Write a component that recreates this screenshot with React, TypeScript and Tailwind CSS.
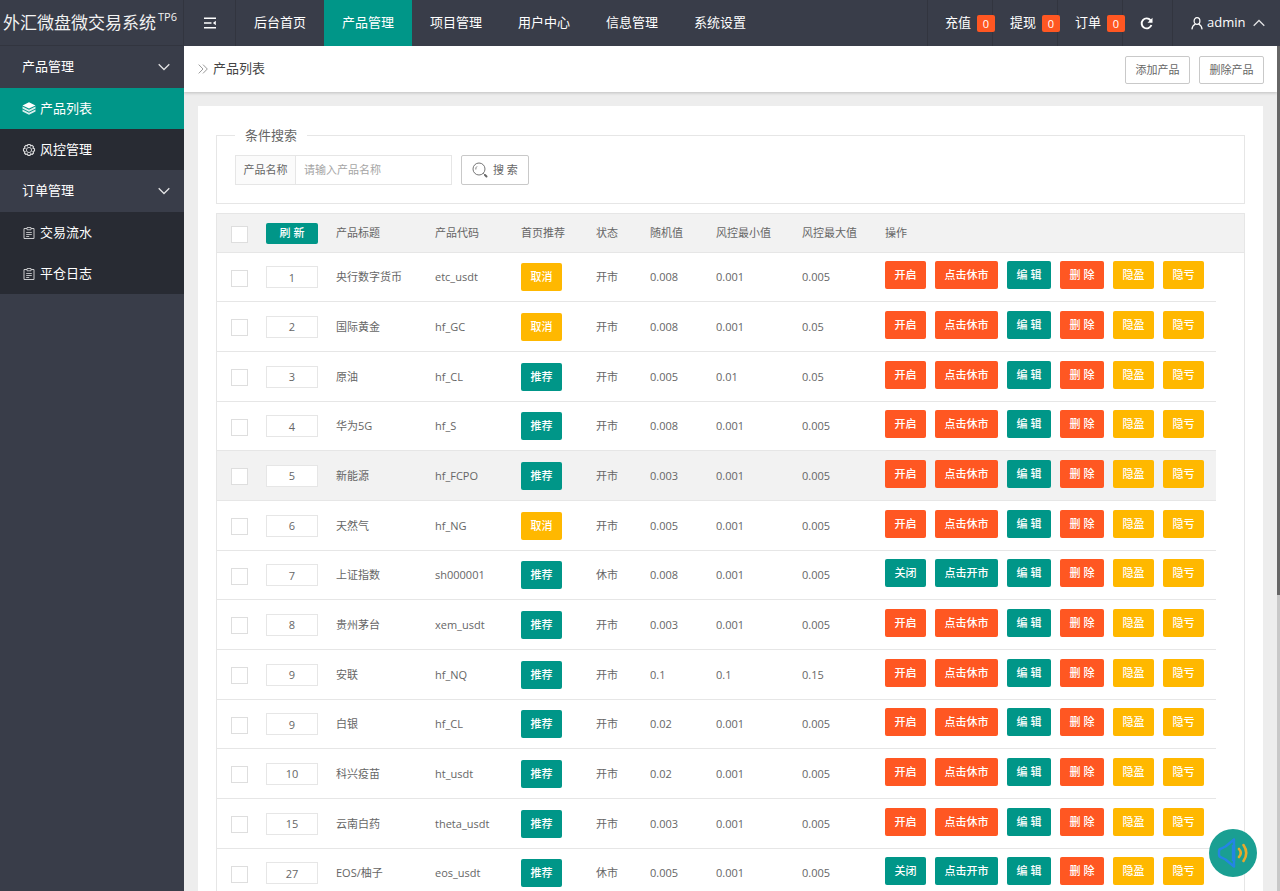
import React, { useState } from "react";

type Row = {
  sort: number;
  title: string;
  code: string;
  recommended: boolean;
  open: boolean;
  random: string;
  min: string;
  max: string;
};

const ROWS: Row[] = [
  { sort: 1, title: "央行数字货币", code: "etc_usdt", recommended: true, open: true, random: "0.008", min: "0.001", max: "0.005" },
  { sort: 2, title: "国际黄金", code: "hf_GC", recommended: true, open: true, random: "0.008", min: "0.001", max: "0.05" },
  { sort: 3, title: "原油", code: "hf_CL", recommended: false, open: true, random: "0.005", min: "0.01", max: "0.05" },
  { sort: 4, title: "华为5G", code: "hf_S", recommended: false, open: true, random: "0.008", min: "0.001", max: "0.005" },
  { sort: 5, title: "新能源", code: "hf_FCPO", recommended: false, open: true, random: "0.003", min: "0.001", max: "0.005" },
  { sort: 6, title: "天然气", code: "hf_NG", recommended: true, open: true, random: "0.005", min: "0.001", max: "0.005" },
  { sort: 7, title: "上证指数", code: "sh000001", recommended: false, open: false, random: "0.008", min: "0.001", max: "0.005" },
  { sort: 8, title: "贵州茅台", code: "xem_usdt", recommended: false, open: true, random: "0.003", min: "0.001", max: "0.005" },
  { sort: 9, title: "安联", code: "hf_NQ", recommended: false, open: true, random: "0.1", min: "0.1", max: "0.15" },
  { sort: 9, title: "白银", code: "hf_CL", recommended: false, open: true, random: "0.02", min: "0.001", max: "0.005" },
  { sort: 10, title: "科兴疫苗", code: "ht_usdt", recommended: false, open: true, random: "0.02", min: "0.001", max: "0.005" },
  { sort: 15, title: "云南白药", code: "theta_usdt", recommended: false, open: true, random: "0.003", min: "0.001", max: "0.005" },
  { sort: 27, title: "EOS/柚子", code: "eos_usdt", recommended: false, open: false, random: "0.005", min: "0.001", max: "0.005" },
];

const NAV = ["后台首页", "产品管理", "项目管理", "用户中心", "信息管理", "系统设置"];
const COUNTERS = ["充值", "提现", "订单"];
const HEADINGS = ["产品标题", "产品代码", "首页推荐", "状态", "随机值", "风控最小值", "风控最大值", "操作"];

const TONES = {
  green: "bg-[#009688]",
  orange: "bg-[#ff5722]",
  yellow: "bg-[#ffb800]",
};
const SIZES = { sm: "w-[41px]", md: "w-[44px]", lg: "w-[63px]" };

function Action({ tone, size = "sm", children }: { tone: keyof typeof TONES; size?: keyof typeof SIZES; children: React.ReactNode }) {
  return (
    <button type="button" className={`h-7 shrink-0 rounded-xs text-center text-[11px] leading-7 font-medium whitespace-nowrap text-white ${TONES[tone]} ${SIZES[size]}`}>
      {children}
    </button>
  );
}

function Chevron({ up = false }: { up?: boolean }) {
  return (
    <svg width="12" height="8" viewBox="0 0 12 8" fill="none" stroke="currentColor" strokeWidth="1.3" opacity=".85" aria-hidden="true">
      <path d={up ? "M.7 6.8 6 1.5l5.3 5.3" : "M.7 1.2 6 6.5l5.3-5.3"} />
    </svg>
  );
}

function MenuIcon() {
  return (
    <svg width="12" height="12" viewBox="0 0 12 12" fill="none" stroke="currentColor" strokeWidth="1.5" aria-hidden="true">
      <path d="M0 1.200h12M0 6h7.500M0 10.800h12" />
      <path d="M11.800 3.800v4.400L8.900 6z" fill="currentColor" stroke="none" />
    </svg>
  );
}

function ReloadIcon() {
  return (
    <svg width="13" height="13" viewBox="0 0 13 13" fill="none" aria-hidden="true">
      <path d="M10.600 3.300A5 5 0 1 0 11.400 8" stroke="currentColor" strokeWidth="1.900" />
      <path d="M12.500.8v5h-5z" fill="currentColor" />
    </svg>
  );
}

function UserIcon() {
  return (
    <svg width="12" height="13" viewBox="0 0 12 13" fill="none" stroke="currentColor" strokeWidth="1.200" aria-hidden="true">
      <ellipse cx="6" cy="4" rx="2.900" ry="3.300" />
      <path d="M4.400 7C2.400 8 1.100 9.800.9 12.400M7.600 7c2 1 3.300 2.800 3.500 5.400" />
    </svg>
  );
}

function LayersIcon() {
  return (
    <svg width="14" height="13" viewBox="0 0 14 13" fill="currentColor" aria-hidden="true">
      <path d="M7 .3 13.500 3.400 7 6.500.5 3.400z" />
      <path d="M.5 4.600 7 7.700l6.500-3.100v2L7 9.700.5 6.600z" opacity=".85" />
      <path d="M.5 7.600 7 10.700l6.500-3.100v2L7 12.700.5 9.600z" opacity=".85" />
    </svg>
  );
}

function GearIcon() {
  return (
    <svg width="14" height="14" viewBox="0 0 14 14" fill="none" stroke="currentColor" opacity=".85" aria-hidden="true">
      <circle cx="7" cy="7" r="2.600" strokeWidth=".9" />
      <path
        d="M5.900.7h2.200l.5 1.500 1.500-.7 1.500 1.500-.7 1.500 1.600.5v2.200l-1.600.5.7 1.500-1.500 1.500-1.500-.7-.5 1.600H5.900l-.5-1.600-1.500.7-1.500-1.500.7-1.500-1.600-.5V5l1.600-.5-.7-1.500 1.500-1.500 1.500.7z"
        transform="translate(0 .8)"
        strokeWidth="1.100"
        strokeLinejoin="round"
      />
    </svg>
  );
}

function NoteIcon() {
  return (
    <svg width="12" height="12" viewBox="0 0 12 12" fill="none" stroke="currentColor" opacity=".75" aria-hidden="true">
      <path d="M4 1.500H1v10h10v-10H8" />
      <path d="M4 .5h4v2.300H4zM3.200 5.500h5.600M3.200 7.500h5.600M3.200 9.500h3" strokeWidth=".9" />
    </svg>
  );
}

function SearchIcon() {
  return (
    <svg width="16" height="16" viewBox="0 0 16 16" fill="none" stroke="currentColor" aria-hidden="true">
      <circle cx="7" cy="7" r="6" strokeWidth=".9" />
      <path d="M3.800 7.500A3.300 3.300 0 0 1 5 4.400" strokeWidth=".8" />
      <path d="m11.300 11.300 1.400 1.400" />
      <path d="m13 13 1.500 1.500" strokeWidth="2" strokeLinecap="round" />
    </svg>
  );
}

function Breadcrumb() {
  return (
    <svg width="10" height="10" viewBox="0 0 10 10" fill="none" stroke="#999" aria-hidden="true">
      <path d="m.7.600 4.300 4.400L.7 9.400M5 .600 9.300 5 5 9.400" />
    </svg>
  );
}

function SpeakerIcon() {
  return (
    <svg width="32" height="32" viewBox="0 0 32 32" fill="none" aria-hidden="true">
      <path d="M17 2.500 8.500 9.500 4.500 11.500a3 3 0 0 0-2.500 3v3a3 3 0 0 0 2.500 3l4 2L17 29.500z" stroke="#2485e4" strokeWidth="2.400" strokeLinejoin="round" />
      <path d="M16.500 8v16" stroke="#2485e4" strokeWidth="3.400" />
      <path d="M22 12q3.500 4 0 8M26.500 8q5.500 8 0 16" stroke="#e8a92c" strokeWidth="2.600" strokeLinecap="round" />
    </svg>
  );
}

function Check({ label }: { label: string }) {
  return (
    <input
      type="checkbox"
      aria-label={label}
      className="mt-[2px] block size-[17px] appearance-none border border-[#dedede] bg-white checked:border-[#009688] checked:bg-[#009688]"
    />
  );
}

function SideLink({ icon, active = false, children }: { icon: React.ReactNode; active?: boolean; children: React.ReactNode }) {
  return (
    <a href="#" className={`flex h-[41px] items-center gap-1 pl-[22px] ${active ? "bg-[#009688]" : ""}`}>
      <span className="flex w-[14px] justify-center">{icon}</span>
      {children}
    </a>
  );
}

function SideGroup({ title, children }: { title: string; children: React.ReactNode }) {
  const [open, setOpen] = useState(true);
  return (
    <li>
      <button type="button" aria-expanded={open} onClick={() => setOpen(!open)} className="flex h-[42px] w-full items-center justify-between pr-[14px] pl-[22px]">
        {title}
        <Chevron />
      </button>
      {open && <div className="bg-[#282b33]">{children}</div>}
    </li>
  );
}

function ProductRow({ row }: { row: Row }) {
  const line = "border-b border-[#e6e6e6] pl-[9px]";
  return (
    <tr className={`h-[50px] nth-[3n+1]:h-[49px] ${row.sort === 5 ? "[&>td:not(:last-child)]:bg-[#f2f2f2]" : ""}`}>
      <td className="border-b border-[#e6e6e6] pl-[14px]">
        <Check label={`选择 ${row.title}`} />
      </td>
      <td className={line}>
        <input aria-label={`${row.title} 排序`} defaultValue={row.sort} className="block h-[22px] w-[52px] border border-[#e6e6e6] bg-white text-center outline-none" />
      </td>
      <td className={line}>{row.title}</td>
      <td className={line}>{row.code}</td>
      <td className={line}>
        <div className="flex">{row.recommended ? <Action tone="yellow">取消</Action> : <Action tone="green">推荐</Action>}</div>
      </td>
      <td className={line}>{row.open ? "开市" : "休市"}</td>
      <td className={line}>{row.random}</td>
      <td className={line}>{row.min}</td>
      <td className={line}>{row.max}</td>
      <td className={line}>
        <div className="flex gap-[9px] pb-1">
          <Action tone={row.open ? "orange" : "green"}>{row.open ? "开启" : "关闭"}</Action>
          <Action tone={row.open ? "orange" : "green"} size="lg">
            {row.open ? "点击休市" : "点击开市"}
          </Action>
          <Action tone="green" size="md">编 辑</Action>
          <Action tone="orange" size="md">删 除</Action>
          <Action tone="yellow">隐盈</Action>
          <Action tone="yellow">隐亏</Action>
        </div>
      </td>
      <td />
    </tr>
  );
}

export default function App() {
  return (
    <div className="flex h-screen flex-col overflow-hidden bg-[#ededed] font-['Open_Sans','Noto_Sans_CJK_SC',sans-serif] text-[13px] text-[#666]">
      <header className="flex h-[46px] shrink-0 bg-[#393d49] text-white">
        <h1 className="flex w-[184px] shrink-0 items-center gap-[2px] border-r border-b border-[#32353f] pl-[3px] text-[17px] whitespace-nowrap text-[#f2f2f2]">
          外汇微盘微交易系统
          <sup className="text-[11px] font-medium">TP6</sup>
        </h1>
        <button type="button" aria-label="折叠菜单" className="flex w-[52px] shrink-0 items-center justify-center border-r border-[#32353f]">
          <MenuIcon />
        </button>
        <nav className="flex flex-1">
          {NAV.map((item) => (
            <a key={item} href="#" className={`flex w-[88px] items-center justify-center whitespace-nowrap ${item === "产品管理" ? "bg-[#009688]" : ""}`}>
              {item}
            </a>
          ))}
        </nav>
        <div className="flex">
          {COUNTERS.map((item) => (
            <a key={item} href="#" className="relative flex w-[65px] items-center border-l border-[#32353f] pl-[17px]">
              {item}
              <span className="absolute top-[15px] left-[49px] z-10 h-[17px] w-[18px] rounded-xs bg-[#ff5722] text-center text-[11px] leading-[17px]">0</span>
            </a>
          ))}
          <button type="button" aria-label="刷新页面" className="flex w-[50px] items-center border-l border-[#32353f] pl-[17px]">
            <ReloadIcon />
          </button>
          <button type="button" className="flex w-[108px] items-center gap-1 border-l border-[#32353f] pl-[18px]">
            <UserIcon />
            <span className="mr-1">admin</span>
            <Chevron up />
          </button>
        </div>
      </header>

      <div className="flex min-h-0 flex-1">
        <aside className="w-[184px] shrink-0 bg-[#393d49] text-white">
          <ul>
            <SideGroup title="产品管理">
              <SideLink icon={<LayersIcon />} active>产品列表</SideLink>
              <SideLink icon={<GearIcon />}>风控管理</SideLink>
            </SideGroup>
            <SideGroup title="订单管理">
              <SideLink icon={<NoteIcon />}>交易流水</SideLink>
              <SideLink icon={<NoteIcon />}>平仓日志</SideLink>
            </SideGroup>
          </ul>
        </aside>

        <main className="min-w-0 flex-1 overflow-hidden">
          <div className="flex h-[46px] items-center justify-between bg-white pr-[13px] pl-[14px] shadow-[0_1px_3px_rgba(0,0,0,0.2)]">
            <div className="flex items-center gap-[5px] text-[#444]">
              <Breadcrumb />
              产品列表
            </div>
            <div className="flex gap-[9px] pt-[2px] text-[11px]">
              <button type="button" className="h-7 w-[65px] rounded-xs border border-[#c9c9c9]">添加产品</button>
              <button type="button" className="h-7 w-[65px] rounded-xs border border-[#c9c9c9]">删除产品</button>
            </div>
          </div>

          <section className="mx-[14px] mt-[14px] bg-white px-[18px] pt-[19px] pb-[18px]">
            <fieldset className="border border-[#e6e6e6] px-[18px] pb-[18px]">
              <legend className="px-[10px] leading-5">条件搜索</legend>
              <form className="flex gap-[9px] pt-[10px] text-[11px]" onSubmit={(e) => e.preventDefault()}>
                <div className="flex h-[30px]">
                  <label htmlFor="product-name" className="flex w-[61px] items-center justify-center border border-[#e6e6e6] bg-[#fbfbfb]">产品名称</label>
                  <input id="product-name" type="text" placeholder="请输入产品名称" className="w-[156px] border border-l-0 border-[#e6e6e6] px-2 outline-none placeholder:text-[#a5a5a5]" />
                </div>
                <button type="submit" className="flex h-[30px] w-[68px] items-center gap-[5px] rounded-xs border border-[#c9c9c9] pl-[10px] whitespace-nowrap">
                  <SearchIcon />
                  搜 索
                </button>
              </form>
            </fieldset>

            <div className="mt-[9px] border border-[#e6e6e6]">
              <table className="w-full table-fixed border-separate border-spacing-0 text-left text-[11px] leading-5">
                <colgroup>
                  <col className="w-[40px]" />
                  <col className="w-[70px]" />
                  <col className="w-[99px]" />
                  <col className="w-[86px]" />
                  <col className="w-[75px]" />
                  <col className="w-[54px]" />
                  <col className="w-[66px]" />
                  <col className="w-[86px]" />
                  <col className="w-[83px]" />
                  <col className="w-[340px]" />
                  <col />
                </colgroup>
                <thead>
                  <tr className="h-[39px] bg-[#f2f2f2]">
                    <th className="border-b border-[#e6e6e6] pl-[14px]">
                      <Check label="全选" />
                    </th>
                    <th className="border-b border-[#e6e6e6] pl-[9px]">
                      <button type="button" className="block h-[21px] w-[52px] rounded-xs bg-[#009688] text-[11px] leading-5 font-medium text-white">刷 新</button>
                    </th>
                    {HEADINGS.map((h) => (
                      <th key={h} scope="col" className="border-b border-[#e6e6e6] pl-[9px] font-normal whitespace-nowrap">{h}</th>
                    ))}
                    <td className="border-b border-[#e6e6e6]" />
                  </tr>
                </thead>
                <tbody>
                  {ROWS.map((row) => (
                    <ProductRow key={row.title} row={row} />
                  ))}
                </tbody>
              </table>
            </div>
          </section>
        </main>

        <div className="w-[3px] shrink-0 bg-[#c8c8c8]" aria-hidden="true">
          <div className="h-[65%] bg-[#666]" />
        </div>
      </div>

      <button type="button" aria-label="声音提醒" className="fixed right-[23px] bottom-[14px] flex size-12 items-center justify-center rounded-full bg-[#1a9f92]">
        <SpeakerIcon />
      </button>
    </div>
  );
}
